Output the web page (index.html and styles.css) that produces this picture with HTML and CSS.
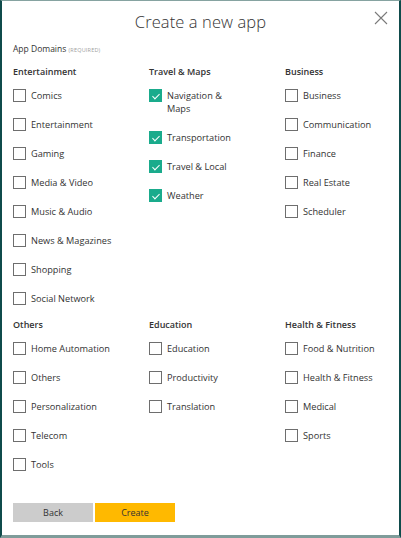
FILE: index.html
```html
<!DOCTYPE html>
<html lang="en">
<head>
<meta charset="utf-8">
<title>Create a new app</title>
<link rel="stylesheet" href="styles.css">
</head>
<body>
<div class="dialog">
  <header class="dialog-head">
    <h1 class="title">Create a new app</h1>
    <button class="close" aria-label="Close">
      <svg width="14" height="14" viewBox="0 0 14 14"><path d="M1 1 L13 13 M13 1 L1 13" stroke="#7a7a7a" stroke-width="1.1" fill="none"/></svg>
    </button>
  </header>
  <div class="field-label">App Domains <span class="req">(REQUIRED)</span></div>

  <div class="grid">
    <section class="col">
      <h2 class="col-title">Entertainment</h2>
      <label class="item"><span class="box"></span><span class="text">Comics</span></label>
      <label class="item"><span class="box"></span><span class="text">Entertainment</span></label>
      <label class="item"><span class="box"></span><span class="text">Gaming</span></label>
      <label class="item"><span class="box"></span><span class="text">Media &amp; Video</span></label>
      <label class="item"><span class="box"></span><span class="text">Music &amp; Audio</span></label>
      <label class="item"><span class="box"></span><span class="text">News &amp; Magazines</span></label>
      <label class="item"><span class="box"></span><span class="text">Shopping</span></label>
      <label class="item"><span class="box"></span><span class="text">Social Network</span></label>
    </section>
    <section class="col">
      <h2 class="col-title">Travel &amp; Maps</h2>
      <label class="item"><span class="box checked"></span><span class="text narrow">Navigation &amp; Maps</span></label>
      <label class="item"><span class="box checked"></span><span class="text">Transportation</span></label>
      <label class="item"><span class="box checked"></span><span class="text">Travel &amp; Local</span></label>
      <label class="item"><span class="box checked"></span><span class="text">Weather</span></label>
    </section>
    <section class="col">
      <h2 class="col-title">Business</h2>
      <label class="item"><span class="box"></span><span class="text">Business</span></label>
      <label class="item"><span class="box"></span><span class="text">Communication</span></label>
      <label class="item"><span class="box"></span><span class="text">Finance</span></label>
      <label class="item"><span class="box"></span><span class="text">Real Estate</span></label>
      <label class="item"><span class="box"></span><span class="text">Scheduler</span></label>
    </section>

    <section class="col">
      <h2 class="col-title">Others</h2>
      <label class="item"><span class="box"></span><span class="text">Home Automation</span></label>
      <label class="item"><span class="box"></span><span class="text">Others</span></label>
      <label class="item"><span class="box"></span><span class="text">Personalization</span></label>
      <label class="item"><span class="box"></span><span class="text">Telecom</span></label>
      <label class="item"><span class="box"></span><span class="text">Tools</span></label>
    </section>
    <section class="col">
      <h2 class="col-title">Education</h2>
      <label class="item"><span class="box"></span><span class="text">Education</span></label>
      <label class="item"><span class="box"></span><span class="text">Productivity</span></label>
      <label class="item"><span class="box"></span><span class="text">Translation</span></label>
    </section>
    <section class="col">
      <h2 class="col-title">Health &amp; Fitness</h2>
      <label class="item"><span class="box"></span><span class="text">Food &amp; Nutrition</span></label>
      <label class="item"><span class="box"></span><span class="text">Health &amp; Fitness</span></label>
      <label class="item"><span class="box"></span><span class="text">Medical</span></label>
      <label class="item"><span class="box"></span><span class="text">Sports</span></label>
    </section>
  </div>

  <div class="actions">
    <button class="btn btn-back">Back</button>
    <button class="btn btn-create">Create</button>
  </div>
</div>
</body>
</html>
```
FILE: styles.css
```css
* { box-sizing: border-box; }
html, body { margin: 0; padding: 0; background: #ffffff; }
body {
  font-family: "Open Sans", "Noto Sans", sans-serif;
  color: #333333;
}
.dialog {
  position: relative;
  width: 401px;
  height: 538px;
  border-left: 2px solid #0f4b4b;
  border-right: 2px solid #0f4b4b;
  border-top: 1px solid #86a3a1;
  border-bottom: 3px solid #7f9c9a;
  padding: 0 11px;
  display: flex;
  flex-direction: column;
}
.dialog-head {
  height: 40px;
  display: flex;
  align-items: center;
  justify-content: center;
  padding-top: 1px;
}
.title {
  margin: 0;
  font-weight: 300;
  font-size: 16.5px;
  letter-spacing: 0.1px;
  color: #333;
  line-height: 24px;
}
.close {
  position: absolute;
  right: 11px;
  top: 10px;
  width: 14px;
  height: 14px;
  padding: 0;
  border: 0;
  background: none;
  display: flex;
}
.field-label {
  font-size: 8.5px;
  line-height: 12px;
  color: #333;
  margin-top: 2px;
}
.req {
  font-size: 5.5px;
  color: #a0a0a0;
  letter-spacing: 0.2px;
}
.grid {
  display: grid;
  grid-template-columns: 136px 136px 1fr;
  row-gap: 13px;
  margin-top: 9px;
}
.col {
  display: flex;
  flex-direction: column;
  gap: 16px;
}
.col-title {
  margin: 0 0 -5px 0;
  font-size: 9px;
  font-weight: 600;
  line-height: 13px;
  color: #333;
}
.item {
  display: flex;
  align-items: flex-start;
  gap: 5px;
}
.box {
  flex: none;
  width: 13px;
  height: 13px;
  border: 1px solid #6e6e6e;
  background: #fff;
  position: relative;
}
.box.checked {
  background: #1aab8c;
  border-color: #1aab8c;
}
.box.checked::after {
  content: "";
  position: absolute;
  left: 3.5px;
  top: 1.5px;
  width: 3px;
  height: 6px;
  border-right: 1px solid #fff;
  border-bottom: 1px solid #fff;
  transform: rotate(45deg);
}
.text {
  font-size: 9.2px;
  line-height: 13px;
  color: #333;
}
.text.narrow { max-width: 72px; }
.actions {
  margin-top: auto;
  margin-bottom: 13px;
  display: flex;
  gap: 2px;
}
.btn {
  width: 80px;
  height: 19px;
  border: 0;
  padding: 0;
  font-family: "Open Sans", "Noto Sans", sans-serif;
  font-size: 9px;
  color: #333;
}
.btn-back { background: #cccccc; }
.btn-create { background: #ffb900; }
```
